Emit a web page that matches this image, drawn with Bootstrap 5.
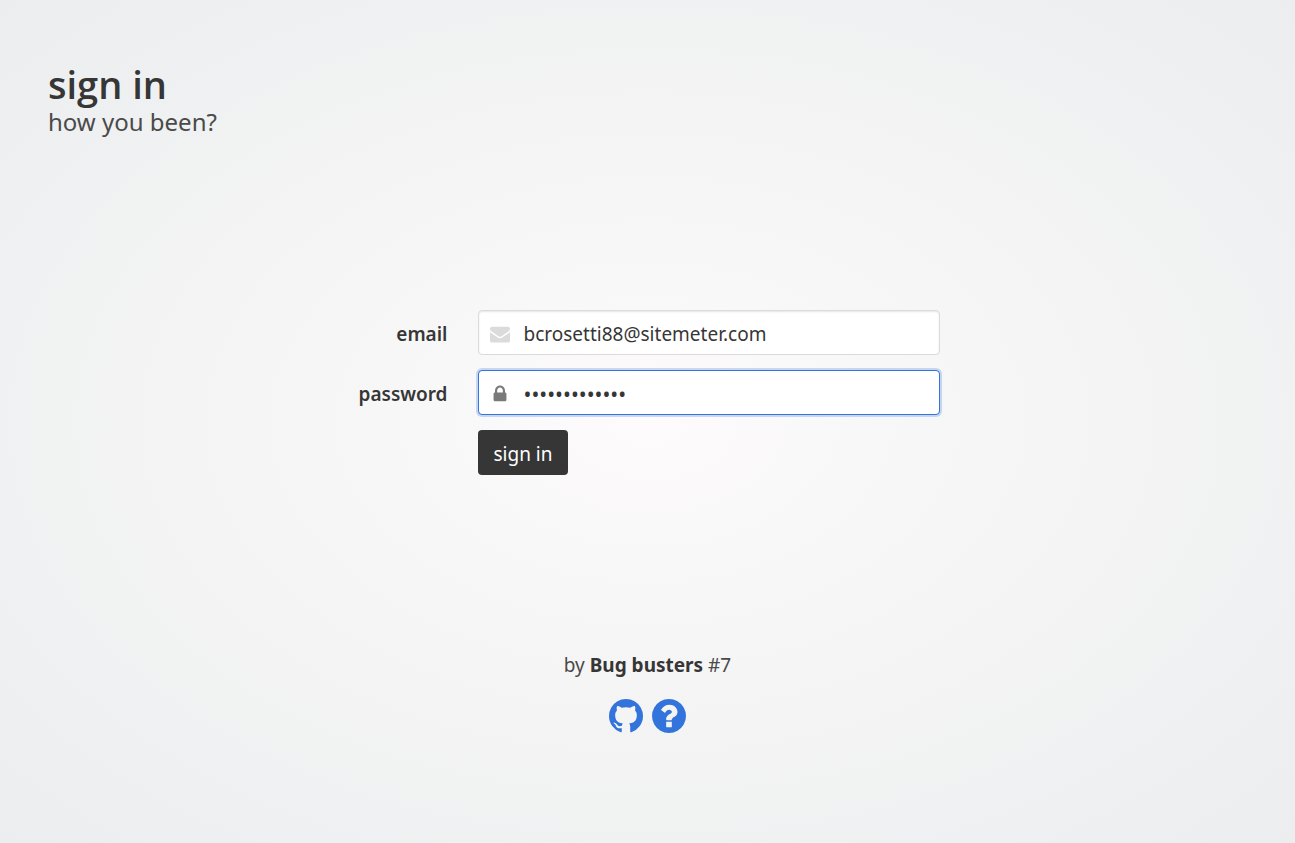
<!DOCTYPE html>
<html lang="en">
<head>
<meta charset="utf-8">
<meta name="viewport" content="width=device-width, initial-scale=1">
<title>sign in</title>
<link href="https://cdn.jsdelivr.net/npm/bootstrap@5.3.0/dist/css/bootstrap.min.css" rel="stylesheet">
<script src="https://cdn.jsdelivr.net/npm/bootstrap@5.3.0/dist/js/bootstrap.bundle.min.js" defer></script>
<style>
body{font-family:"Noto Sans","Open Sans",sans-serif;font-size:19px;line-height:34px;color:#4a4a4a;background:radial-gradient(#fdfbfb 0%,#ebedee 100%) #ebedee}
.page-title{font:600 38px/43px "Open Sans","Noto Sans",sans-serif;color:#363636}
.page-subtitle{font-size:24px;line-height:31px}
.page-head{padding:63px 48px 0}
.signin-form{width:100%;max-width:585px;row-gap:15px}
.field-row{column-gap:30px}
.field-label{flex:1 1 0;padding-top:3px;font-weight:600;color:#363636;text-align:right}
.field-body{flex:5 1 0}
.field-box,.field-box:focus{color:#363636}
.field-box{height:45px;padding:2px 14px 0 45px;font-size:19px;border:1px solid #dbdbdb;border-radius:4px;box-shadow:inset 0 1px 2px rgba(10,10,10,.1)}
.field-box[type=password]{font-size:21px}
.field-box:focus{border-color:#3273dc;box-shadow:0 0 0 2px rgba(50,115,220,.25)}
.field-icon{left:0;top:0;width:45px;height:45px;padding-top:3px;color:#dbdbdb;pointer-events:none}
.field-box:focus~.field-icon{color:#7a7a7a}
.btn-sign,.btn-sign:hover{background:#363636;color:#fff}
.btn-sign{height:45px;padding:4px 15px 0 16px;font-size:19px;border:0;border-radius:4px}
.credit{padding-bottom:110px}
.credit strong{font-weight:700;color:#363636}
.credit-links{gap:9px;margin-top:17px}
.credit-links a{color:#3273dc}
svg{display:block;fill:currentColor}
</style>
</head>
<body class="min-vh-100 d-flex flex-column">
<header class="page-head">
  <h1 class="page-title m-0">sign in</h1>
  <p class="page-subtitle m-0">how you been?</p>
</header>
<main class="flex-grow-1 d-flex justify-content-center align-items-center">
  <form class="signin-form d-flex flex-column">
    <div class="field-row d-flex align-items-center">
      <label class="field-label" for="email">email</label>
      <div class="field-body position-relative">
        <input class="form-control field-box" id="email" type="email" value="bcrosetti88@sitemeter.com">
        <span class="field-icon position-absolute d-flex align-items-center justify-content-center"><svg width="20" height="20" viewBox="0 0 1792 1792" aria-hidden="true"><path d="M1792 710v794q0 66-47 113t-113 47h-1472q-66 0-113-47t-47-113v-794q44 49 101 87 362 246 497 345 57 42 92.500 65.500t94.500 48 110 24.500h2q51 0 110-24.500t94.500-48 92.500-65.500q170-123 498-345 57-39 100-87zm0-294q0 79-49 151t-122 123q-376 261-468 325-10 7-42.500 31t-54 38.800-52 32.500-57.500 27-50 9h-2q-23 0-50-9t-57.500-27-52-32.500-54-38.800-42.500-31q-91-64-262-182.500t-205-142.500q-62-42-117-115.500t-55-136.500q0-78 41.500-130t118.500-52h1472q65 0 112.500 47t47.500 113z"/></svg></span>
      </div>
    </div>
    <div class="field-row d-flex align-items-center">
      <label class="field-label" for="password">password</label>
      <div class="field-body position-relative">
        <input class="form-control field-box" id="password" type="password" value="abcdefghijklm" autofocus>
        <span class="field-icon position-absolute d-flex align-items-center justify-content-center"><svg width="20" height="20" viewBox="0 0 1792 1792" aria-hidden="true"><path d="M640 768h512v-192q0-106-75-181t-181-75-181 75-75 181v192zm832 96v576q0 40-28 68t-68 28h-960q-40 0-68-28t-28-68v-576q0-40 28-68t68-28h32v-192q0-184 132-316t316-132 316 132 132 316v192h32q40 0 68 28t28 68z"/></svg></span>
      </div>
    </div>
    <div class="field-row d-flex">
      <div class="field-label"></div>
      <div class="field-body d-flex"><button class="btn btn-sign" type="submit">sign in</button></div>
    </div>
  </form>
</main>
<footer class="credit text-center">
  <p class="m-0">by <strong>Bug busters</strong> #7</p>
  <div class="credit-links d-flex justify-content-center">
    <a href="#github" aria-label="GitHub"><svg width="34" height="34" viewBox="128 128 1536 1536" aria-hidden="true"><path d="M896 128q209 0 385.500 103t279.500 279.500 103 385.500q0 251-146.500 451.500t-378.500 277.500q-27 5-40-7t-13-30q0-3 .5-76.500t.5-134.500q0-97-52-142 57-6 102.500-18t94-39 81-66.500 53-105 20.500-150.500q0-119-79-206 37-91-8-204-28-9-81 11t-92 44l-38 24q-93-26-192-26t-192 26q-16-11-42.500-27t-83.500-38.500-85-13.500q-45 113-8 204-79 87-79 206 0 85 20.500 150t52.500 105 80.500 67 94 39 102.500 18q-39 36-49 103-21 10-45 15t-57 5-65.500-21.500-55.500-62.500q-19-32-48.500-52t-49.500-24l-20-3q-21 0-29 4.500t-5 11.500 9 14 13 12l7 5q22 10 43.500 38t31.500 51l10 23q13 38 44 61.500t67 30 69.500 7 55.500-3.500l23-4q0 38 .5 88.500t.5 54.500q0 18-13 30t-40 7q-232-77-378.500-277.500t-146.500-451.500q0-209 103-385.500t279.500-279.500 385.500-103z"/></svg></a>
    <a href="#help" aria-label="Help"><svg width="34" height="34" viewBox="128 128 1536 1536" aria-hidden="true"><path d="M1024 1376v-192q0-14-9-23t-23-9h-192q-14 0-23 9t-9 23v192q0 14 9 23t23 9h192q14 0 23-9t9-23zm256-672q0-88-55.500-163t-138.500-116-170-41q-243 0-371 213-15 24 8 42l132 100q7 6 19 6 16 0 25-12 53-68 86-92 34-24 86-24 48 0 85.500 26t37.500 59q0 38-20 61t-68 45q-63 28-115.500 86.500t-52.500 125.500v36q0 14 9 23t23 9h192q14 0 23-9t9-23q0-19 21.500-49.500t54.500-49.500q32-18 49-28.500t46-35 44.500-48 28-60.500 12.500-81zm384 192q0 209-103 385.500t-279.500 279.500-385.500 103-385.500-103-279.500-279.500-103-385.500 103-385.500 279.500-279.500 385.500-103 385.500 103 279.500 279.500 103 385.500z"/></svg></a>
  </div>
</footer>
</body>
</html>
